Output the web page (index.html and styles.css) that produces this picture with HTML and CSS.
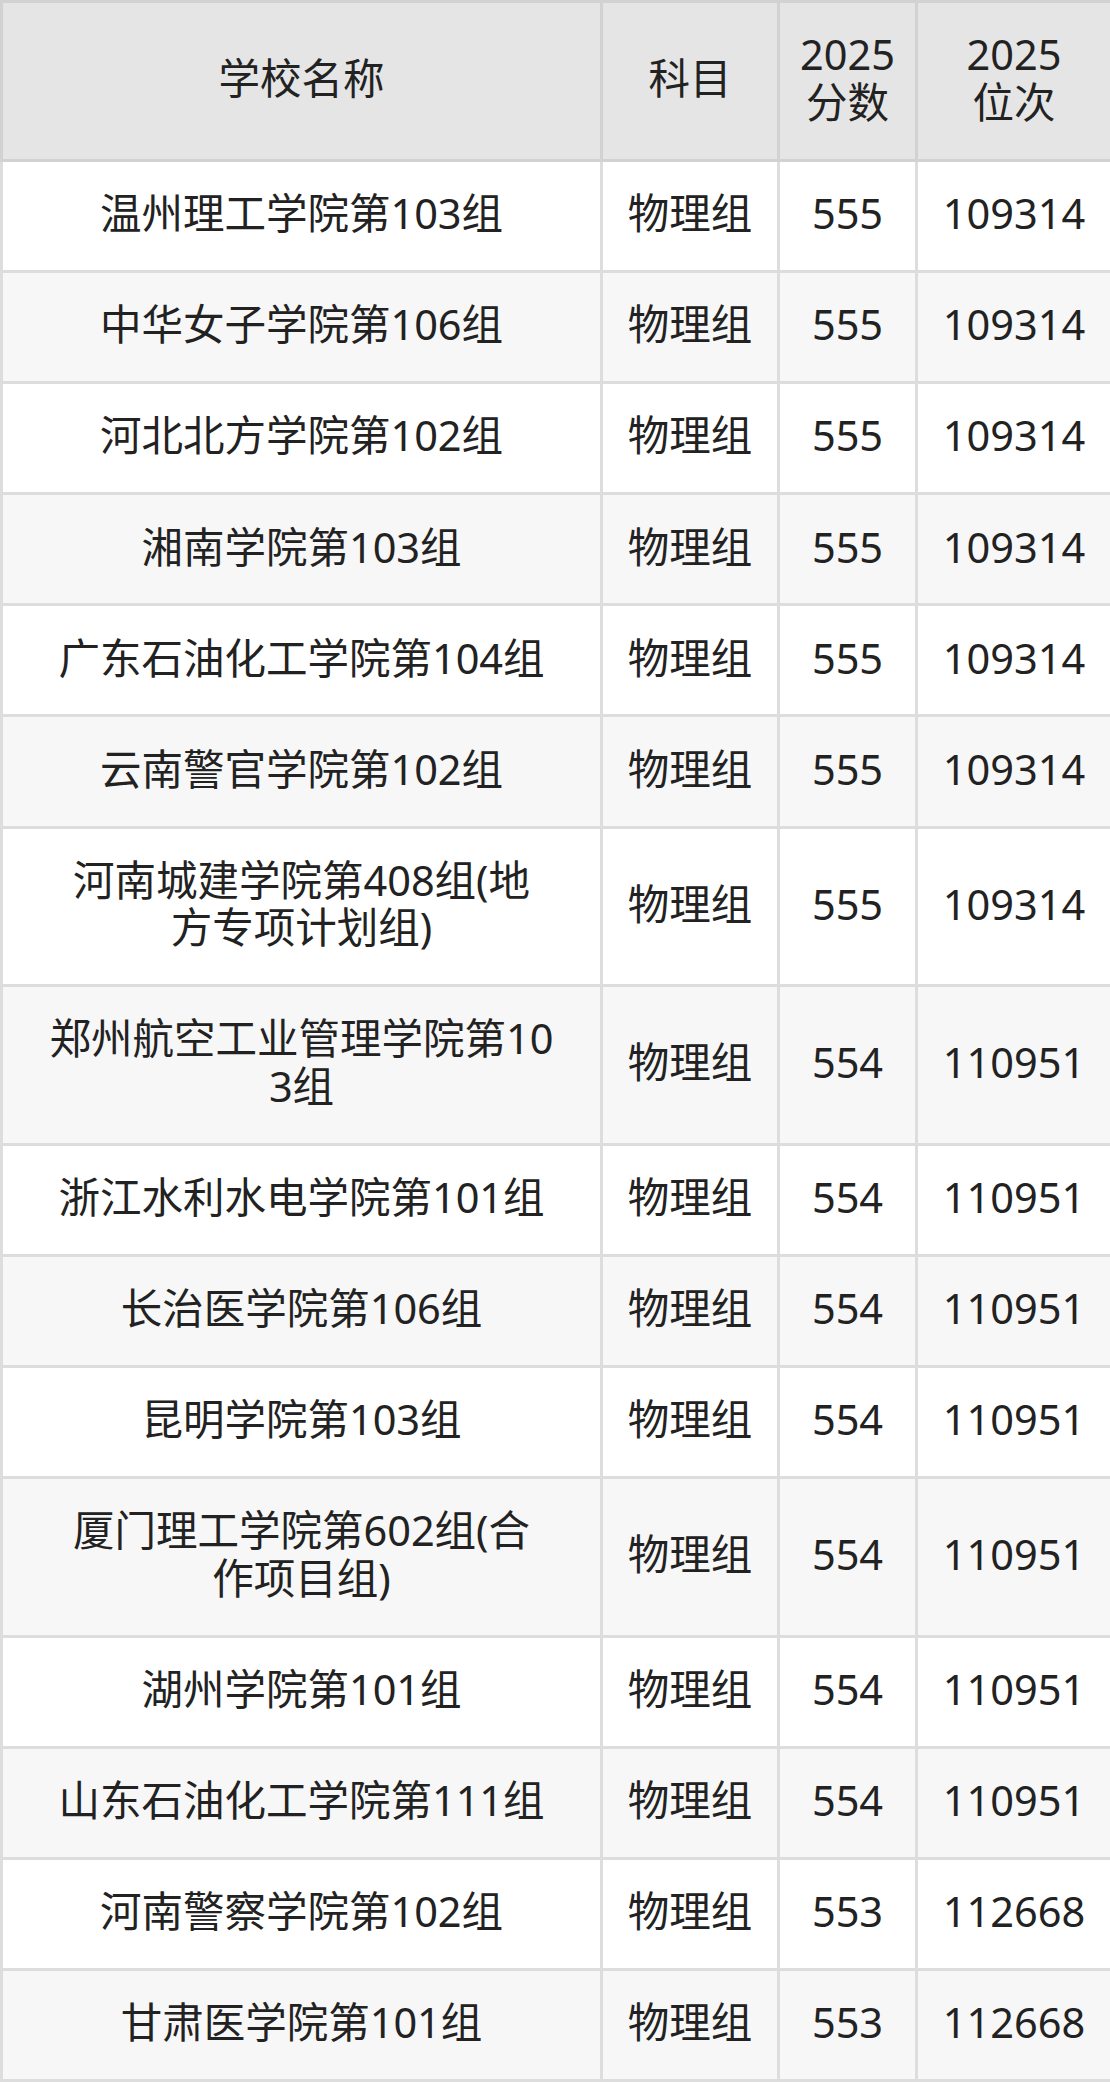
FILE: index.html
```html
<!DOCTYPE html>
<html lang="zh-CN">
<head>
<meta charset="utf-8">
<title>分数位次</title>
<link rel="stylesheet" href="styles.css">
</head>
<body>
<table class="score-table">
  <colgroup>
    <col class="c-name">
    <col class="c-subj">
    <col class="c-score">
    <col class="c-rank">
  </colgroup>
  <thead>
    <tr><th>学校名称</th><th>科目</th><th>2025分数</th><th>2025位次</th></tr>
  </thead>
  <tbody>
    <tr><td>温州理工学院第103组</td><td>物理组</td><td>555</td><td>109314</td></tr>
    <tr><td>中华女子学院第106组</td><td>物理组</td><td>555</td><td>109314</td></tr>
    <tr><td>河北北方学院第102组</td><td>物理组</td><td>555</td><td>109314</td></tr>
    <tr><td>湘南学院第103组</td><td>物理组</td><td>555</td><td>109314</td></tr>
    <tr><td>广东石油化工学院第104组</td><td>物理组</td><td>555</td><td>109314</td></tr>
    <tr><td>云南警官学院第102组</td><td>物理组</td><td>555</td><td>109314</td></tr>
    <tr><td>河南城建学院第408组(地<br>方专项计划组)</td><td>物理组</td><td>555</td><td>109314</td></tr>
    <tr><td>郑州航空工业管理学院第103组</td><td>物理组</td><td>554</td><td>110951</td></tr>
    <tr><td>浙江水利水电学院第101组</td><td>物理组</td><td>554</td><td>110951</td></tr>
    <tr><td>长治医学院第106组</td><td>物理组</td><td>554</td><td>110951</td></tr>
    <tr><td>昆明学院第103组</td><td>物理组</td><td>554</td><td>110951</td></tr>
    <tr><td>厦门理工学院第602组(合<br>作项目组)</td><td>物理组</td><td>554</td><td>110951</td></tr>
    <tr><td>湖州学院第101组</td><td>物理组</td><td>554</td><td>110951</td></tr>
    <tr><td>山东石油化工学院第111组</td><td>物理组</td><td>554</td><td>110951</td></tr>
    <tr><td>河南警察学院第102组</td><td>物理组</td><td>553</td><td>112668</td></tr>
    <tr><td>甘肃医学院第101组</td><td>物理组</td><td>553</td><td>112668</td></tr>
  </tbody>
</table>
</body>
</html>
```

FILE: styles.css
```css
html, body {
  margin: 0;
  padding: 0;
  background: #ffffff;
}

.score-table {
  width: 1110px;
  table-layout: fixed;
  border-collapse: collapse;
  font-family: "Noto Sans", "Noto Sans CJK SC", sans-serif;
  font-size: 41.5px;
  line-height: 47.6px;
  color: #222222;
}

.c-name { width: 600px; }
.c-subj { width: 177px; }
.c-score { width: 138px; }
.c-rank { width: 195px; }

.score-table th,
.score-table td {
  text-align: center;
  vertical-align: middle;
}

.score-table th {
  font-weight: normal;
  background: #e5e5e5;
  border: 3px solid #d2d2d2;
  padding: 28.4px 8px 32.4px;
}

.score-table th:last-child {
  padding-left: 32px;
  padding-right: 32px;
}

.score-table td {
  border: 3px solid #dddddd;
  padding: 28.25px 8px 32.25px;
  word-break: break-all;
}

.score-table td:first-child {
  padding-left: 40px;
  padding-right: 40px;
}

.score-table tbody tr:nth-child(odd) td {
  background: #ffffff;
}

.score-table tbody tr:nth-child(even) td {
  background: #f7f7f7;
}
```
